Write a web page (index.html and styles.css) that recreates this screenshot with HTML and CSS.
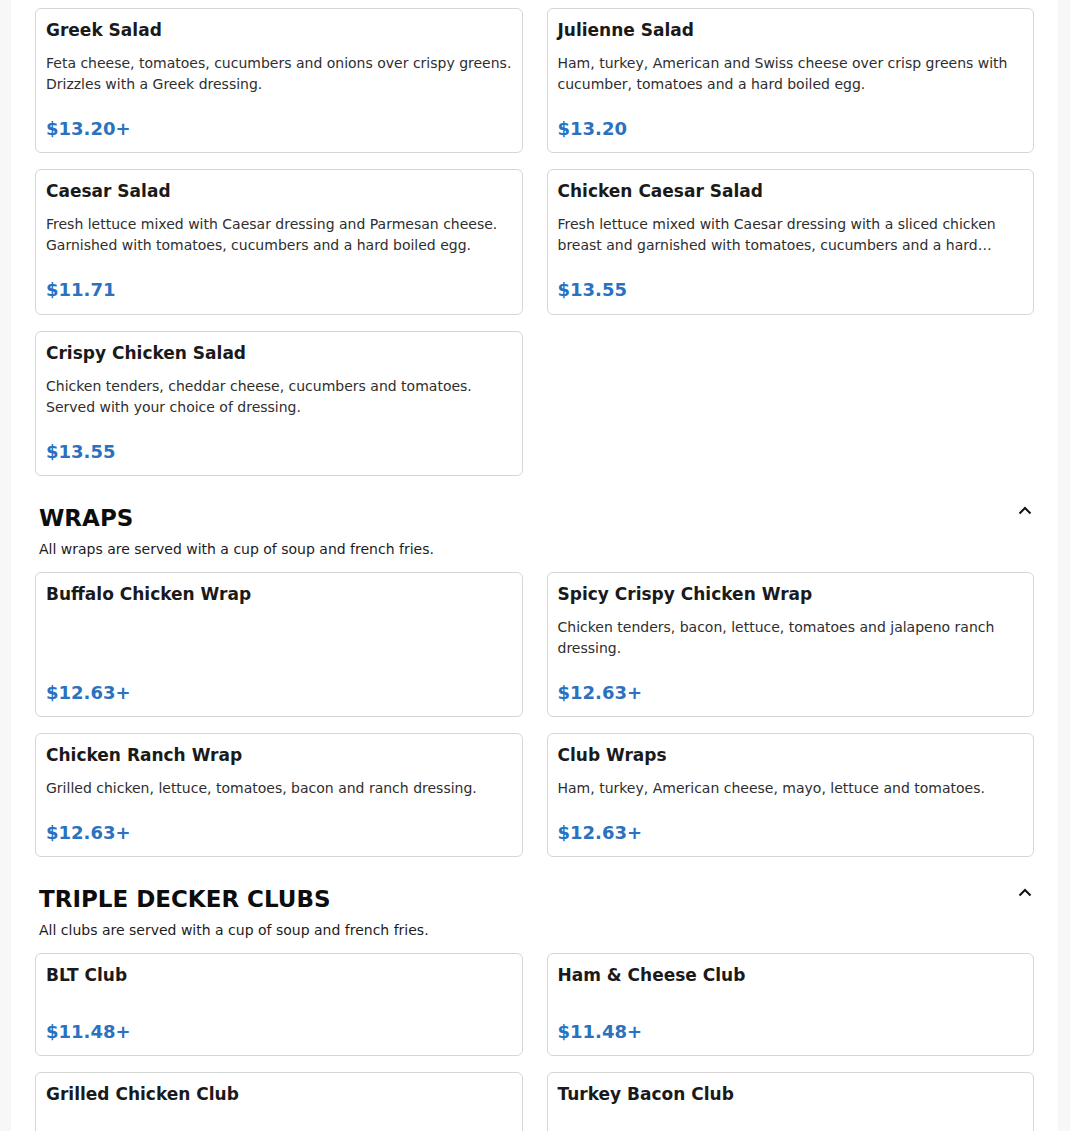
FILE: index.html
```html
<!DOCTYPE html>
<html>
<head>
<meta charset="utf-8">
<link rel="stylesheet" href="styles.css">
</head>
<body>
<div class="page">
  <section class="section">
    <div class="grid">
      <div class="card">
        <div class="title">Greek Salad</div>
        <div class="desc">Feta cheese, tomatoes, cucumbers and onions over crispy greens. Drizzles with a Greek dressing.</div>
        <div class="price">$13.20+</div>
      </div>
      <div class="card">
        <div class="title">Julienne Salad</div>
        <div class="desc">Ham, turkey, American and Swiss cheese over crisp greens with cucumber, tomatoes and a hard boiled egg.</div>
        <div class="price">$13.20</div>
      </div>
      <div class="card">
        <div class="title">Caesar Salad</div>
        <div class="desc">Fresh lettuce mixed with Caesar dressing and Parmesan cheese. Garnished with tomatoes, cucumbers and a hard boiled egg.</div>
        <div class="price">$11.71</div>
      </div>
      <div class="card">
        <div class="title">Chicken Caesar Salad</div>
        <div class="desc">Fresh lettuce mixed with Caesar dressing with a sliced chicken breast and garnished with tomatoes, cucumbers and a hard boiled egg.</div>
        <div class="price">$13.55</div>
      </div>
      <div class="card">
        <div class="title">Crispy Chicken Salad</div>
        <div class="desc">Chicken tenders, cheddar cheese, cucumbers and tomatoes. Served with your choice of dressing.</div>
        <div class="price">$13.55</div>
      </div>
    </div>
  </section>

  <section class="section">
    <div class="section-head">
      <h2 class="section-title">WRAPS</h2>
      <svg class="chevron" width="14" height="9" viewBox="0 0 14 9"><path d="M1.5 7.5 L7 2 L12.5 7.5" fill="none" stroke="#111" stroke-width="2"/></svg>
    </div>
    <p class="section-sub">All wraps are served with a cup of soup and french fries.</p>
    <div class="grid">
      <div class="card">
        <div class="title">Buffalo Chicken Wrap</div>
        <div class="desc desc-blank"></div>
        <div class="price">$12.63+</div>
      </div>
      <div class="card">
        <div class="title">Spicy Crispy Chicken Wrap</div>
        <div class="desc">Chicken tenders, bacon, lettuce, tomatoes and jalapeno ranch dressing.</div>
        <div class="price">$12.63+</div>
      </div>
      <div class="card">
        <div class="title">Chicken Ranch Wrap</div>
        <div class="desc">Grilled chicken, lettuce, tomatoes, bacon and ranch dressing.</div>
        <div class="price">$12.63+</div>
      </div>
      <div class="card">
        <div class="title">Club Wraps</div>
        <div class="desc">Ham, turkey, American cheese, mayo, lettuce and tomatoes.</div>
        <div class="price">$12.63+</div>
      </div>
    </div>
  </section>

  <section class="section">
    <div class="section-head">
      <h2 class="section-title">TRIPLE DECKER CLUBS</h2>
      <svg class="chevron" width="14" height="9" viewBox="0 0 14 9"><path d="M1.5 7.5 L7 2 L12.5 7.5" fill="none" stroke="#111" stroke-width="2"/></svg>
    </div>
    <p class="section-sub">All clubs are served with a cup of soup and french fries.</p>
    <div class="grid">
      <div class="card">
        <div class="title">BLT Club</div>
        <div class="desc"></div>
        <div class="price">$11.48+</div>
      </div>
      <div class="card">
        <div class="title">Ham &amp; Cheese Club</div>
        <div class="desc"></div>
        <div class="price">$11.48+</div>
      </div>
      <div class="card">
        <div class="title">Grilled Chicken Club</div>
        <div class="desc"></div>
        <div class="price">$11.48+</div>
      </div>
      <div class="card">
        <div class="title">Turkey Bacon Club</div>
        <div class="desc"></div>
        <div class="price">$11.48+</div>
      </div>
    </div>
  </section>
</div>
</body>
</html>
```

FILE: styles.css
```css
html, body {
  margin: 0;
  padding: 0;
  background: #f7f7f7;
  font-family: "DejaVu Sans", Verdana, sans-serif;
  color: #1c1c1c;
}
.page {
  width: 1047px;
  margin: 0 0 0 11px;
  background: #fff;
  padding: 8px 24px 40px;
  box-sizing: border-box;
  min-height: 1131px;
}
.section + .section {
  margin-top: 28.5px;
}
.grid {
  display: grid;
  grid-template-columns: 1fr 1fr;
  column-gap: 24px;
  row-gap: 16px;
  align-items: start;
}
.card {
  border: 1px solid #d6d6d6;
  border-radius: 6px;
  padding: 11px 10px 13px;
  display: flex;
  flex-direction: column;
}
.title {
  font-size: 17px;
  font-weight: bold;
  line-height: 21.6px;
  color: #1a1a1a;
}
.desc {
  font-size: 14px;
  line-height: 21px;
  color: #2e2e2e;
  margin-top: 11.4px;
  margin-bottom: 22.8px;
  display: -webkit-box;
  -webkit-line-clamp: 2;
  -webkit-box-orient: vertical;
  overflow: hidden;
}
.desc-blank {
  min-height: 42px;
}
.price {
  font-size: 18px;
  font-weight: bold;
  line-height: 21.6px;
  color: #2a72c0;
}
.section-head {
  display: flex;
  justify-content: space-between;
  align-items: center;
  padding: 0 2px 0 4px;
}
.section-title {
  margin: 0;
  font-size: 23px;
  line-height: 27.6px;
  font-weight: bold;
  color: #0d0d0d;
}
.chevron {
  display: block;
  margin-top: -15px;
}
.section-sub {
  margin: 6.5px 0 12px;
  padding-left: 4px;
  font-size: 14px;
  line-height: 21px;
  color: #1c1c1c;
}
```
